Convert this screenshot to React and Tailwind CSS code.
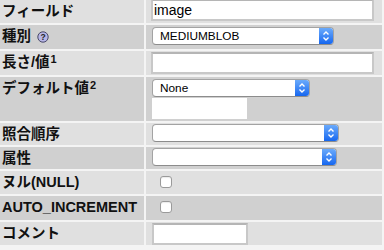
function Chevrons() {
  return (
    <svg width="8" height="12" viewBox="0 0 8 12" fill="none" stroke="white" strokeWidth="1.4">
      <path d="M1.5 4.5 L4 2 L6.5 4.5" />
      <path d="M1.5 7.5 L4 10 L6.5 7.5" />
    </svg>
  );
}

function Select({ w, value }) {
  return (
    <div className={`flex h-[18px] ${w} overflow-hidden rounded-[4px] border border-[#a3a3a3] border-b-[#8c8c8c] bg-white`}>
      <span className="flex-1 pl-[7px] text-[11.8px] leading-[16px] text-black">{value}</span>
      <span className="flex w-[14px] items-center justify-center bg-gradient-to-b from-[#6aaafb] to-[#1466ef]">
        <Chevrons />
      </span>
    </div>
  );
}

function TextInput({ w, value, extra }) {
  return (
    <div className={`h-[22px] ${w} ${extra} border-2 border-[#c8c8c8] border-t-[#b5b5b5] bg-white pl-[1px] text-[14px] leading-[18px] text-black`}>
      {value}
    </div>
  );
}

function Checkbox() {
  return <div className="ml-[9px] h-[12px] w-[12px] rounded-[3px] border border-[#9a9a9a] bg-white shadow-[inset_0_1px_1px_rgba(0,0,0,0.08)]" />;
}

function Help() {
  return (
    <svg width="12" height="12" viewBox="0 0 12 12" className="ml-[6px] mt-[5px]">
      <circle cx="6" cy="6" r="5.2" fill="#b7b6e6" stroke="#3b3b5a" strokeWidth="0.9" />
      <text x="6" y="9" textAnchor="middle" fontSize="8.5" fontWeight="bold" fill="#222" fontFamily="Liberation Sans, sans-serif">?</text>
    </svg>
  );
}

function Row({ h, dark, label, children }) {
  const bg = dark ? "bg-[#d0d0d0]" : "bg-[#e0e0e0]";
  return (
    <div className={`grid ${h} grid-cols-[144px_236px] gap-[2px]`}>
      <div className={`${bg} flex items-start pl-[2px] pt-[1px] text-[14.5px] font-bold leading-[20px] text-[#111]`}>{label}</div>
      <div className={`${bg} flex flex-col items-start pl-[5px]`}>{children}</div>
    </div>
  );
}

export default function App() {
  return (
    <div
      className="flex h-[250px] w-[384px] flex-col gap-[2px] overflow-hidden bg-[#f4f4f4]"
      style={{ fontFamily: '"Liberation Sans", "Noto Sans CJK JP", sans-serif' }}
    >
      <Row h="h-[23px]" label="フィールド">
        <TextInput w="w-[223px]" extra="-mt-[1px]" value="image" />
      </Row>
      <Row h="h-[24px]" dark label={<><span>種別</span><Help /></>}>
        <div className="mt-[2px] ml-[1px]"><Select w="w-[182px]" value="MEDIUMBLOB" /></div>
      </Row>
      <Row h="h-[24px]" label={<span>長さ/値<span className="ml-[1px] text-[11px] leading-none align-[4px]">1</span></span>}>
        <TextInput w="w-[223px]" extra="mt-[1px]" value="" />
      </Row>
      <Row h="h-[44px]" dark label={<span>デフォルト値<span className="ml-[1px] text-[11px] leading-none align-[4px]">2</span></span>}>
        <div className="mt-[2px] ml-[1px]"><Select w="w-[158px]" value="None" /></div>
        <div className="ml-[1px] mt-[1px] h-[21px] w-[95px] bg-white" />
      </Row>
      <Row h="h-[22px]" label="照合順序">
        <div className="mt-[1px] ml-[1px]"><Select w="w-[187px]" value="" /></div>
      </Row>
      <Row h="h-[22px]" dark label="属性">
        <div className="mt-[1px] ml-[1px]"><Select w="w-[185px]" value="" /></div>
      </Row>
      <Row h="h-[23px]" label="ヌル(NULL)">
        <div className="mt-[5px]"><Checkbox /></div>
      </Row>
      <Row h="h-[24px]" dark label="AUTO_INCREMENT">
        <div className="mt-[5px]"><Checkbox /></div>
      </Row>
      <Row h="h-[23px]" label="コメント">
        <TextInput w="w-[96px]" extra="mt-[1px] ml-[1px]" value="" />
      </Row>
    </div>
  );
}
